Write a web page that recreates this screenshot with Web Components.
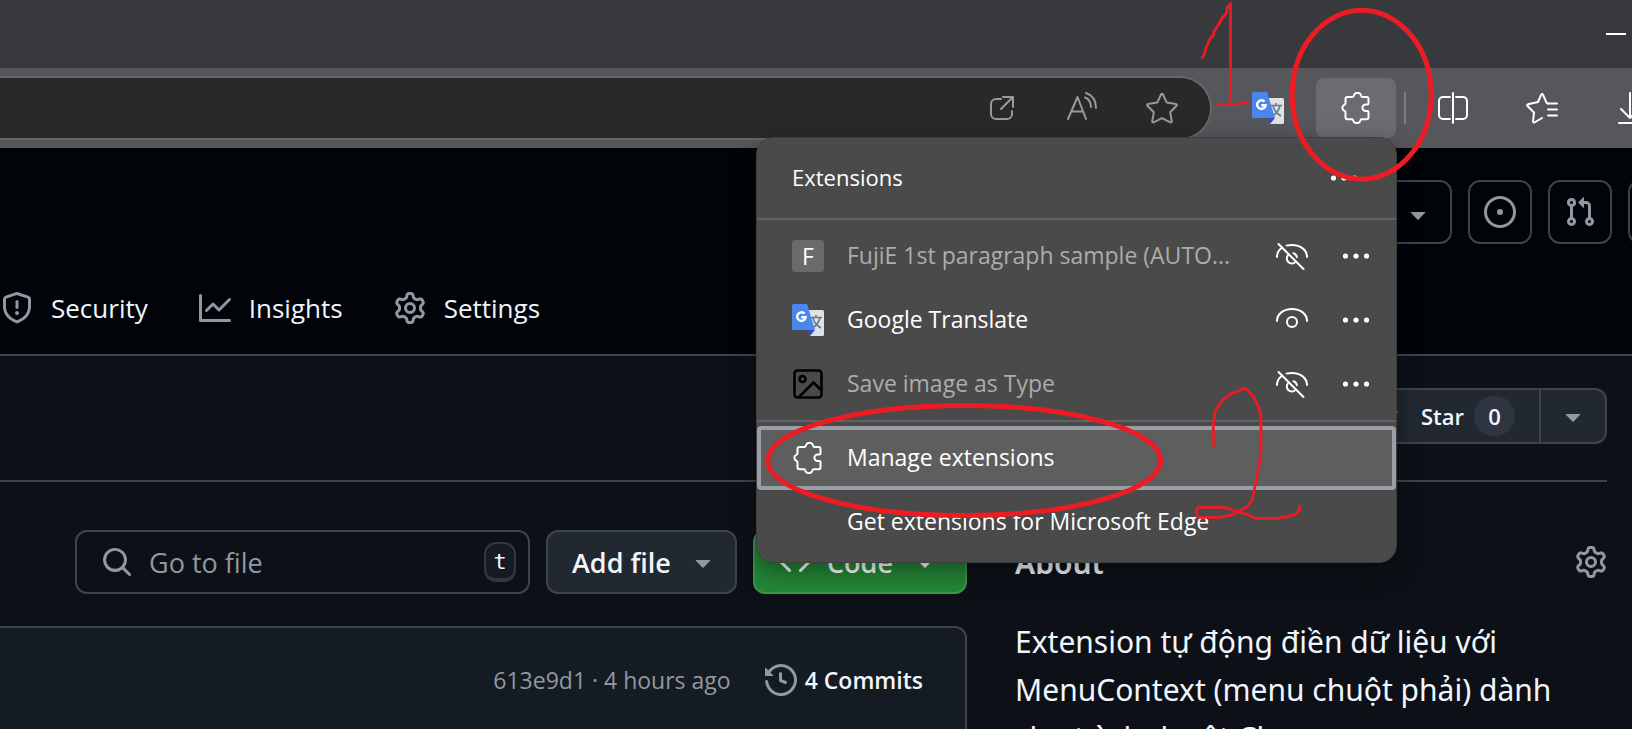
<!DOCTYPE html>
<html lang="en">
<head>
<meta charset="utf-8">
<title>Repository – browser window</title>
<style>
  html, body { margin: 0; height: 100%; background: #0d1117; }
  body { font-family: "Open Sans", "Noto Sans", sans-serif; font-size: 23px; color: #f0f6fc; }
</style>
</head>
<body>
<browser-window>
  <browser-titlebar slot="chrome"></browser-titlebar>
  <browser-toolbar slot="chrome"></browser-toolbar>
  <repo-page>
    <repo-header slot="header">
      <repo-tab icon="shield">Security</repo-tab>
      <repo-tab icon="graph">Insights</repo-tab>
      <repo-tab icon="gear">Settings</repo-tab>
    </repo-header>
    <repo-actions slot="actions" stars="0"></repo-actions>
    <file-tools slot="main"></file-tools>
    <commit-bar slot="main" sha="613e9d1" age="4 hours ago" count="4 Commits"></commit-bar>
    <about-panel slot="aside">Extension tự động điền dữ liệu với MenuContext (menu chuột phải) dành cho trình duyệt Chrome</about-panel>
  </repo-page>
  <extensions-menu slot="overlay">
    <extension-row icon="letter" muted hidden-eye>FujiE 1st paragraph sample (AUTO...</extension-row>
    <extension-row icon="translate">Google Translate</extension-row>
    <extension-row icon="picture" muted hidden-eye>Save image as Type</extension-row>
  </extensions-menu>
  <ink-marks slot="overlay"></ink-marks>
</browser-window>

<script>
const ICONS = {
  shield: ['0 0 16 16', '<path fill="currentColor" d="M7.467.133a1.748 1.748 0 0 1 1.066 0l5.25 1.68A1.75 1.75 0 0 1 15 3.48V7c0 1.566-.32 3.182-1.303 4.682-.983 1.498-2.585 2.813-5.032 3.855a1.697 1.697 0 0 1-1.33 0c-2.447-1.042-4.049-2.357-5.032-3.855C1.32 10.182 1 8.566 1 7V3.48a1.75 1.75 0 0 1 1.217-1.667Zm.61 1.429a.25.25 0 0 0-.153 0l-5.25 1.68a.25.25 0 0 0-.174.238V7c0 1.358.275 2.666 1.057 3.86.784 1.194 2.121 2.34 4.366 3.297a.196.196 0 0 0 .154 0c2.245-.956 3.582-2.104 4.366-3.298C13.225 9.666 13.5 8.36 13.5 7V3.48a.251.251 0 0 0-.174-.237l-5.25-1.68ZM8.75 4.75v3a.75.75 0 0 1-1.5 0v-3a.75.75 0 0 1 1.5 0ZM9 10.5a1 1 0 1 1-2 0 1 1 0 0 1 2 0Z"/>'],
  graph: ['0 0 16 16', '<path fill="currentColor" d="M1.5 1.75V13.5h13.75a.75.75 0 0 1 0 1.5H.75a.75.75 0 0 1-.75-.75V1.75a.75.75 0 0 1 1.5 0Zm14.28 2.53-5.25 5.25a.75.75 0 0 1-1.06 0L7 7.06 4.28 9.78a.751.751 0 0 1-1.042-.018.751.751 0 0 1-.018-1.042l3.25-3.25a.75.75 0 0 1 1.06 0L10 7.94l4.72-4.72a.751.751 0 0 1 1.042.018.751.751 0 0 1 .018 1.042Z"/>'],
  gear: ['0 0 16 16', '<path fill="currentColor" d="M8 0a8.2 8.2 0 0 1 .701.031C9.444.095 9.99.645 10.16 1.29l.288 1.107c.018.066.079.158.212.224.231.114.454.243.668.386.123.082.233.09.299.071l1.103-.303c.644-.176 1.392.021 1.82.63.27.385.506.792.704 1.218.315.675.111 1.422-.364 1.891l-.814.806c-.049.048-.098.147-.088.294.016.257.016.515 0 .772-.01.147.038.246.088.294l.814.806c.475.469.679 1.216.364 1.891a7.977 7.977 0 0 1-.704 1.217c-.428.61-1.176.807-1.82.63l-1.102-.302c-.067-.019-.177-.011-.3.071a5.909 5.909 0 0 1-.668.386c-.133.066-.194.158-.211.224l-.29 1.106c-.168.646-.715 1.196-1.458 1.26a8.006 8.006 0 0 1-1.402 0c-.743-.064-1.289-.614-1.458-1.26l-.289-1.106c-.018-.066-.079-.158-.212-.224a5.738 5.738 0 0 1-.668-.386c-.123-.082-.233-.09-.299-.071l-1.103.303c-.644.176-1.392-.021-1.82-.63a8.12 8.12 0 0 1-.704-1.218c-.315-.675-.111-1.422.363-1.891l.815-.806c.05-.048.098-.147.088-.294a6.214 6.214 0 0 1 0-.772c.01-.147-.038-.246-.088-.294l-.815-.806C.635 6.045.431 5.298.746 4.623a7.92 7.92 0 0 1 .704-1.217c.428-.61 1.176-.807 1.82-.63l1.102.302c.067.019.177.011.3-.071.214-.143.437-.272.668-.386.133-.066.194-.158.211-.224l.29-1.106C6.009.645 6.556.095 7.299.03 7.53.01 7.764 0 8 0Zm-.571 1.525c-.036.003-.108.036-.137.146l-.289 1.105c-.147.561-.549.967-.998 1.189-.173.086-.34.183-.5.29-.417.278-.97.423-1.529.27l-1.103-.303c-.109-.03-.175.016-.195.045-.22.312-.412.644-.573.99-.014.031-.021.11.059.19l.815.806c.411.406.562.957.53 1.456a4.709 4.709 0 0 0 0 .582c.032.499-.119 1.05-.53 1.456l-.815.806c-.081.08-.073.159-.059.19.162.346.353.677.573.989.02.03.085.076.195.046l1.102-.303c.56-.153 1.113-.008 1.53.27.161.107.328.204.501.29.447.222.85.629.997 1.189l.289 1.105c.029.109.101.143.137.146a6.6 6.6 0 0 0 1.142 0c.036-.003.108-.036.137-.146l.289-1.105c.147-.561.549-.967.998-1.189.173-.086.34-.183.5-.29.417-.278.97-.423 1.529-.27l1.103.303c.109.029.175-.016.195-.045.22-.313.411-.644.573-.99.014-.031.021-.11-.059-.19l-.815-.806c-.411-.406-.562-.957-.53-1.456a4.709 4.709 0 0 0 0-.582c-.032-.499.119-1.05.53-1.456l.815-.806c.081-.08.073-.159.059-.19a6.464 6.464 0 0 0-.573-.989c-.02-.03-.085-.076-.195-.046l-1.102.303c-.56.153-1.113.008-1.53-.27a4.44 4.44 0 0 0-.501-.29c-.447-.222-.85-.629-.997-1.189l-.289-1.105c-.029-.11-.101-.143-.137-.146a6.6 6.6 0 0 0-1.142 0ZM11 8a3 3 0 1 1-6 0 3 3 0 0 1 6 0ZM9.5 8a1.5 1.5 0 1 0-3.001.001A1.5 1.5 0 0 0 9.5 8Z"/>'],
  issue: ['0 0 16 16', '<path fill="currentColor" d="M8 9.5a1.5 1.5 0 1 0 0-3 1.5 1.5 0 0 0 0 3Z"/><path fill="currentColor" d="M8 0a8 8 0 1 1 0 16A8 8 0 0 1 8 0ZM1.5 8a6.5 6.5 0 1 0 13 0 6.5 6.5 0 0 0-13 0Z"/>'],
  pull: ['0 0 16 16', '<path fill="currentColor" d="M1.5 3.25a2.25 2.25 0 1 1 3 2.122v5.256a2.251 2.251 0 1 1-1.5 0V5.372A2.25 2.25 0 0 1 1.5 3.25Zm5.677-.177L9.573.677A.25.25 0 0 1 10 .854V2.5h1A2.5 2.5 0 0 1 13.5 5v5.628a2.251 2.251 0 1 1-1.5 0V5a1 1 0 0 0-1-1h-1v1.646a.25.25 0 0 1-.427.177L7.177 3.427a.25.25 0 0 1 0-.354ZM3.75 2.5a.75.75 0 1 0 0 1.5.75.75 0 0 0 0-1.5Zm0 9.5a.75.75 0 1 0 0 1.5.75.75 0 0 0 0-1.5Zm8.25.75a.75.75 0 1 0 1.5 0 .75.75 0 0 0-1.5 0Z"/>'],
  inbox: ['0 0 16 16', '<path fill="none" stroke="currentColor" stroke-width="1.5" d="M1 9.5 3 2.5h10l2 7v4H1ZM1 9.5h4l1 2h4l1-2h4"/>'],
  caret: ['0 0 16 16', '<path fill="currentColor" d="m4.427 7.427 3.396 3.396a.25.25 0 0 0 .354 0l3.396-3.396A.25.25 0 0 0 11.396 7H4.604a.25.25 0 0 0-.177.427Z"/>'],
  search: ['0 0 16 16', '<path fill="currentColor" d="M10.68 11.74a6 6 0 0 1-7.922-8.982 6 6 0 0 1 8.982 7.922l3.04 3.04a.749.749 0 0 1-.326 1.275.749.749 0 0 1-.734-.215ZM11.5 7a4.499 4.499 0 1 0-8.997 0A4.499 4.499 0 0 0 11.5 7Z"/>'],
  code: ['0 0 16 16', '<path fill="currentColor" d="m11.28 3.22 4.25 4.25a.75.75 0 0 1 0 1.06l-4.25 4.25a.749.749 0 0 1-1.275-.326.749.749 0 0 1 .215-.734L13.94 8l-3.72-3.72a.749.749 0 0 1 .326-1.275.749.749 0 0 1 .734.215Zm-6.56 0a.751.751 0 0 1 1.042.018.751.751 0 0 1 .018 1.042L2.06 8l3.72 3.72a.749.749 0 0 1-.326 1.275.749.749 0 0 1-.734-.215L.47 8.53a.75.75 0 0 1 0-1.06Z"/>'],
  history: ['0 0 16 16', '<path fill="currentColor" d="m.427 1.927 1.215 1.215a8.002 8.002 0 1 1-1.6 5.685.75.75 0 1 1 1.493-.154 6.5 6.5 0 1 0 1.18-4.458l1.358 1.358A.25.25 0 0 1 3.896 6H.25A.25.25 0 0 1 0 5.75V2.104a.25.25 0 0 1 .427-.177ZM7.75 4a.75.75 0 0 1 .75.75v2.992l2.028.812a.75.75 0 0 1-.557 1.392l-2.5-1A.751.751 0 0 1 7 8.25v-3.5A.75.75 0 0 1 7.75 4Z"/>'],
  star: ['0 0 16 16', '<path fill="currentColor" d="M8 .25a.75.75 0 0 1 .673.418l1.882 3.815 4.21.612a.75.75 0 0 1 .416 1.279l-3.046 2.97.719 4.192a.751.751 0 0 1-1.088.791L8 12.347l-3.766 1.98a.75.75 0 0 1-1.088-.79l.72-4.194L.818 6.374a.75.75 0 0 1 .416-1.28l4.21-.611L7.327.668A.75.75 0 0 1 8 .25Zm0 2.445L6.615 5.5a.75.75 0 0 1-.564.41l-3.097.45 2.24 2.184a.75.75 0 0 1 .216.664l-.528 3.084 2.769-1.456a.75.75 0 0 1 .698 0l2.77 1.456-.53-3.084a.75.75 0 0 1 .216-.664l2.24-2.183-3.096-.45a.75.75 0 0 1-.564-.41Z"/>'],
  minimize: ['0 0 32 32', '<path fill="currentColor" d="M6 15h20v2H6z"/>'],
  open: ['0 0 32 32', '<g fill="none" stroke="currentColor" stroke-width="2" stroke-linecap="round" stroke-linejoin="round"><path d="M15 7H10a5 5 0 0 0-5 5v10a5 5 0 0 0 5 5h11a5 5 0 0 0 5-5v-3"/><path d="M17 5h10v10M27 5 15 17"/></g>'],
  read: ['0 0 32 32', '<g fill="none" stroke="currentColor" stroke-width="2" stroke-linecap="round" stroke-linejoin="round"><path d="M2 27 11.500 5 20 27M5.500 19.500h11.500"/><path d="M19 5.500c4 1.500 6 5 6 9.500M20 1c6 2 10 7 10 15"/></g>'],
  favorite: ['0 0 32 32', '<path fill="none" stroke="currentColor" stroke-width="2" stroke-linejoin="round" d="M15.200 2.200a1 1 0 0 1 1.600 0L20.800 10.600 30 12a1 1 0 0 1 .6 1.700L24.200 20.300 25.800 29.400a1 1 0 0 1-1.400 1L16 26.200 7.600 30.400a1 1 0 0 1-1.400-1L7.800 20.300 1.400 13.700A1 1 0 0 1 2 12L11.200 10.600Z"/>'],
  puzzle: ['0 0 32 32', '<path fill="none" stroke="currentColor" stroke-width="2" stroke-linejoin="round" d="M7.500 5h5.200c.8 0 1-.6 1.200-1.400a3.700 3.700 0 0 1 7.200 0c.2.8.4 1.400 1.200 1.400h4.200a2 2 0 0 1 2 2v4.500c0 .7-.4 1-1 1h-1.800a3.300 3.300 0 0 0 0 6.600h1.800c.6 0 1 .3 1 1v5.200a2 2 0 0 1-2 2h-5c-.8 0-1 .6-1.200 1.400a3.700 3.700 0 0 1-7 0c-.2-.8-.4-1.400-1.200-1.400H7.500a2 2 0 0 1-2-2v-5.200c0-.8-.4-1-1.200-1.300a3.300 3.300 0 0 1 0-6c.8-.3 1.200-.5 1.200-1.300V7a2 2 0 0 1 2-2Z"/>'],
  split: ['0 0 32 32', '<g fill="none" stroke="currentColor" stroke-width="2" stroke-linecap="round"><path d="M12 5H5a4 4 0 0 0-4 4v14a4 4 0 0 0 4 4h7M18 5h7a4 4 0 0 1 4 4v14a4 4 0 0 1-4 4h-7M15 1v30"/></g>'],
  favorites: ['0 0 32 32', '<g fill="none" stroke="currentColor" stroke-width="2" stroke-linecap="round" stroke-linejoin="round"><path d="M22 11.500c-.8 0-1.200-.3-1.600-1L17 2.600a1 1 0 0 0-1.800 0L12 10 2 12.300a1 1 0 0 0-.5 1.700L8 20.500 7 29.600a1 1 0 0 0 1.400.9L16 26"/><path d="M22 11.500h9M22 17.500h9M22 23.500h9"/></g>'],
  download: ['0 0 32 32', '<path fill="none" stroke="currentColor" stroke-width="2" stroke-linecap="round" stroke-linejoin="round" d="M16 1v25M7 17l9 9 9-9M5 31h22"/>'],
  eye: ['0 0 32 32', '<g fill="none" stroke="currentColor" stroke-width="2"><path stroke-linecap="round" d="M1 17C1 10 7.500 5 16 5s15 5 15 12"/><circle cx="16" cy="18" r="5"/></g>'],
  'eye-off': ['0 0 32 32', '<g fill="none" stroke="currentColor" stroke-width="2" stroke-linecap="round"><path d="M1 17c0-4 2-7.400 5.500-9.500M10.500 5.600C12.200 5.200 14 5 16 5c8.500 0 15 5 15 12M17.500 13.200a5 5 0 0 1 3.400 4M19.800 21.500a5 5 0 1 1-7-7M2.500 4l25 25"/></g>'],
  more: ['0 0 32 32', '<g fill="currentColor"><circle cx="5.500" cy="16" r="2.600"/><circle cx="16" cy="16" r="2.600"/><circle cx="26.500" cy="16" r="2.600"/></g>'],
  picture: ['0 0 32 32', '<g fill="none" stroke="#000" stroke-width="2.600" stroke-linejoin="round"><rect x="2.500" y="2.500" width="27" height="27" rx="3"/><circle cx="10.500" cy="11" r="3"/><path d="M6.500 29.500 21.500 14.500 29.500 22.500"/></g>'],
  translate: ['0 0 32 32', '<path fill="#dfe1e3" d="M15 6h15.500A1.500 1.500 0 0 1 32 7.500v23a1.500 1.500 0 0 1-1.500 1.500H18z"/><path fill="#3949c6" d="M16 26h7l-5 6z"/><path fill="none" stroke="#5f7f8c" stroke-width="1.600" d="M18.500 13.500H30M24 11v2.500M28 13.500c-1 5-4.500 8.500-7 10.500M21 14c1 4 4.500 8 8 10"/><path fill="#4a86ee" d="M1.500 0H15l8 26H1.500A1.500 1.500 0 0 1 0 24.500v-23A1.500 1.500 0 0 1 1.500 0Z"/><path fill="none" stroke="#fff" stroke-width="2.400" d="M12.500 9.600A4.300 4.300 0 1 0 13.700 13.200H9.200"/>']
};

/* Registers an element whose open shadow root is filled from a template string. */
function define(name, render) {
  customElements.define(name, class extends HTMLElement {
    constructor() {
      super();
      this.attachShadow({ mode: 'open' });
    }
    connectedCallback() {
      const t = document.createElement('template');
      t.innerHTML = '<style>:host,*{box-sizing:border-box}button{font:inherit;color:inherit;background:none;border:0;padding:0;margin:0}</style>' + render(this);
      this.shadowRoot.replaceChildren(t.content.cloneNode(true));
    }
  });
}

define('ui-icon', el => {
  const [box, body] = ICONS[el.getAttribute('name')];
  return `<style>:host{display:block;flex:none;width:32px;height:32px}svg{display:block;width:100%;height:100%}</style>
  <svg viewBox="${box}" aria-hidden="true">${body}</svg>`;
});

define('browser-window', () => `<style>
  :host{display:flex;flex-direction:column;position:relative;height:100vh;overflow:hidden}
  </style><slot name="chrome"></slot><slot></slot><slot name="overlay"></slot>`);

define('browser-titlebar', () => `<style>
  :host{display:flex;flex:none;justify-content:flex-end;align-items:center;height:68px;background:#38393c;color:#fff}
  </style><button aria-label="Minimize"><ui-icon name="minimize"></ui-icon></button>`);

define('tool-button', el => `<style>
  :host{display:block;flex:none;width:80px}
  button{display:grid;place-items:center;width:100%;height:60px;border-radius:8px}
  :host([active]) button{background:#6b6c71}
  </style><button aria-label="${el.getAttribute('label')}"><ui-icon name="${el.getAttribute('icon')}"></ui-icon></button>`);

define('browser-toolbar', () => `<style>
  :host{display:flex;flex:none;align-items:center;gap:8px;height:80px;background:#56575c;color:#fff;overflow:hidden}
  .address{display:flex;flex:1;min-width:0;align-items:center;height:64px;margin-right:8px;padding-right:8px;
    background:#292929;border:2px solid #666;border-left:0;border-radius:0 32px 32px 0;color:#999}
  input{flex:1;min-width:0;border:0;background:none;color:#fff;font:inherit;outline:0}
  .rule{flex:none;width:2px;height:32px;background:#7c7d81}
  .last{margin-right:-38px}
  </style>
  <div class="address"><input aria-label="Address">
    <tool-button icon="open" label="Open in app"></tool-button>
    <tool-button icon="read" label="Read aloud"></tool-button>
    <tool-button icon="favorite" label="Add to favorites"></tool-button></div>
  <tool-button icon="translate" label="Google Translate"></tool-button>
  <tool-button icon="puzzle" label="Extensions" active></tool-button>
  <span class="rule"></span>
  <tool-button icon="split" label="Split screen"></tool-button>
  <tool-button icon="favorites" label="Favorites"></tool-button>
  <tool-button class="last" icon="download" label="Downloads"></tool-button>`);

define('repo-page', () => `<style>
  :host{display:block;flex:1;min-height:0;overflow:hidden;background:#0d1117}
  .columns{display:grid;grid-template-columns:minmax(0,1fr) 592px;gap:48px;padding:48px 25px 0 0}
  </style><slot name="header"></slot><slot name="actions"></slot>
  <div class="columns"><main><slot name="main"></slot></main><aside><slot name="aside"></slot></aside></div>`);

define('repo-tab', el => `<style>
  :host{display:block}
  a{display:flex;align-items:center;gap:18px;height:92px;color:#f0f6fc;font-size:26px;text-decoration:none}
  ui-icon{color:#9198a1}
  </style><a href="#"><ui-icon name="${el.getAttribute('icon')}"></ui-icon><slot></slot></a>`);

define('repo-header', () => `<style>
  :host{display:block;background:#010409;border-bottom:2px solid #3d444d;overflow:hidden}
  .top{display:flex;justify-content:flex-end;gap:16px;margin:32px -60px 0 0}
  .top button{display:grid;place-items:center;width:64px;height:64px;border:2px solid #3d444d;border-radius:12px;color:#9198a1}
  .top .create{width:120px;justify-items:end;padding:4px 16px 0 0}
  nav{display:flex;gap:51px;margin-top:18px;padding-left:1px}
  </style>
  <div class="top"><button class="create" aria-label="Create new"><ui-icon name="caret"></ui-icon></button>
    <button aria-label="Issues"><ui-icon name="issue"></ui-icon></button>
    <button aria-label="Pull requests"><ui-icon name="pull"></ui-icon></button>
    <button aria-label="Notifications"><ui-icon name="inbox"></ui-icon></button></div>
  <nav><slot></slot></nav>`);

define('repo-actions', el => `<style>
  :host{display:flex;justify-content:flex-end;margin-right:25px;padding:32px 0 36px;border-bottom:2px solid #3d444d}
  .group{display:flex;height:56px;background:#212830;border:2px solid #3d444d;border-radius:12px;font-size:22px;font-weight:600}
  .star{display:flex;align-items:center;padding:0 24px;border-right:2px solid #3d444d}
  .star ui-icon{color:#9198a1;margin-right:22px}
  .count{display:grid;place-items:center;width:41px;height:40px;margin-left:10px;border-radius:20px;background:#2f3641}
  .more{display:grid;place-items:center;width:64px;color:#9198a1}
  </style>
  <div class="group"><button class="star"><ui-icon name="star"></ui-icon>Star<span class="count">${el.getAttribute('stars')}</span></button>
  <button class="more" aria-label="Add to list"><ui-icon name="caret"></ui-icon></button></div>`);

define('file-tools', () => `<style>
  :host{display:flex;gap:16px;margin-left:75px;font-size:27px}
  .search{display:flex;flex:1;min-width:0;align-items:center;height:64px;padding:0 12px 0 24px;border:2px solid #3d444d;border-radius:12px;color:#9198a1}
  input{flex:1;min-width:0;margin-left:16px;padding:0;border:0;outline:0;background:none;color:#f0f6fc;font:inherit}
  input::placeholder{color:#9198a1;opacity:1}
  kbd{display:grid;place-items:center;width:32px;height:40px;border:2px solid #2f3742;border-bottom-width:4px;border-radius:12px;
    background:#151b23;color:#f0f6fc;font:22px "DejaVu Sans Mono",monospace}
  button{display:flex;align-items:center;height:64px;border:2px solid #3d444d;border-radius:12px;font-weight:600}
  .add{width:191px;justify-content:space-between;padding:0 16px 0 24px;background:#212830}
  .add ui-icon{color:#9198a1}
  .code{width:214px;padding:0 24px;gap:16px;background:#238636;border-color:#3a9549;color:#fff}
  .code ui-icon:last-child{margin-left:auto}
  </style>
  <label class="search"><ui-icon name="search"></ui-icon><input type="text" placeholder="Go to file" aria-label="Go to file"><kbd>t</kbd></label>
  <button class="add">Add file<ui-icon name="caret"></ui-icon></button>
  <button class="code"><ui-icon name="code"></ui-icon>Code<ui-icon name="caret"></ui-icon></button>`);

define('commit-bar', el => `<style>
  :host{display:flex;justify-content:flex-end;align-items:center;gap:34px;height:108px;margin:32px 0 0 -20px;padding-right:42px;
    background:#151b23;border:2px solid #3d444d;border-radius:12px 12px 0 0;color:#9198a1;font-size:23px}
  a{display:flex;align-items:center;gap:8px;color:#f0f6fc;font-weight:600;text-decoration:none}
  a ui-icon{color:#9198a1}
  </style><span>${el.getAttribute('sha')} · ${el.getAttribute('age')}</span>
  <a href="#"><ui-icon name="history"></ui-icon>${el.getAttribute('count')}</a>`);

define('about-panel', () => `<style>
  :host{display:block;font-family:"Noto Sans","Open Sans",sans-serif;font-size:30px}
  header{display:flex;justify-content:space-between;align-items:center;height:64px}
  h2{margin:0;font-size:30px;font-weight:600}
  button{color:#9198a1}
  p{margin:24px 0 0;line-height:48px}
  </style><header><h2>About</h2><button aria-label="Edit repository details"><ui-icon name="gear"></ui-icon></button></header>
  <p><slot></slot></p>`);

define('extension-row', el => {
  const off = el.hasAttribute('hidden-eye');
  const name = el.getAttribute('icon');
  return `<style>
  :host{display:flex;align-items:center;height:64px;padding:0 8px 0 35px}
  .badge{display:grid;place-items:center;width:32px;height:32px;border-radius:4px;background:#6b6b6b;color:#fff}
  .name{flex:1;margin-left:23px;padding-bottom:2px;white-space:nowrap}
  :host([muted]) .name{color:#acacac}
  button{display:grid;place-items:center;width:64px;height:64px}
  </style>${name === 'letter' ? '<span class="badge">F</span>' : `<ui-icon name="${name}"></ui-icon>`}
  <span class="name"><slot></slot></span>
  <button aria-label="${off ? 'Show' : 'Hide'} in toolbar"><ui-icon name="${off ? 'eye-off' : 'eye'}"></ui-icon></button>
  <button aria-label="More actions"><ui-icon name="more"></ui-icon></button>`;
});

define('extensions-menu', () => `<style>
  :host{position:absolute;top:137px;right:235px;width:641px;background:#4a4a4a;border:1px solid #3e3e3e;border-radius:18px;color:#fff;
    font-size:23px;box-shadow:0 8px 24px rgba(0,0,0,.4);overflow:hidden}
  header{display:flex;justify-content:space-between;align-items:center;height:80px;padding:0 20px 0 35px}
  h2{margin:0;padding-bottom:2px;font-size:22px;font-weight:400}
  header button{display:grid;place-items:center;width:64px;height:64px}
  .list,.links{padding:4px 0;border-top:2px solid #636363}
  .links{padding-bottom:8px}
  .links button{display:flex;align-items:center;width:100%;height:64px;padding-left:35px;gap:23px}
  .links span{padding-bottom:2px}
  .links .current{background:#5e5e5e;border:4px solid #9a9ea6;border-radius:4px;padding-left:31px}
  .links button:last-child{padding-left:90px}
  </style>
  <header><h2>Extensions</h2><button aria-label="More options"><ui-icon name="more"></ui-icon></button></header>
  <div class="list"><slot></slot></div>
  <div class="links"><button class="current"><ui-icon name="puzzle"></ui-icon><span>Manage extensions</span></button>
  <button><span>Get extensions for Microsoft Edge</span></button></div>`);

/* Hand-drawn pen annotations, a free canvas anchored to the window's right edge. */
define('ink-marks', () => `<style>
  :host{position:absolute;top:0;right:0;width:1632px;height:729px;pointer-events:none}
  svg{display:block}
  </style><svg width="1632" height="729" viewBox="0 0 1632 729" fill="none" stroke="#ed1c24" stroke-linecap="round" stroke-linejoin="round">
  <g stroke-width="5"><ellipse cx="1361.700" cy="94.700" rx="69.500" ry="84.500"/><ellipse cx="964.200" cy="460.500" rx="196.500" ry="55"/></g>
  <g stroke-width="2.800"><path d="M1202 57.500 1204 55 1206 48 1210 39 1213.500 35 1214 31.500 1219 24 1222 18.500 1226.500 13 1227 8 1230.500 3.500V103.500M1217.500 104.500H1238L1242 103H1248"/>
  <path d="M1214.300 446.700 1213.300 440V425L1215 411.700 1221.700 400.700 1230 394.300 1239.300 390.700 1241.700 389H1246.700L1249 392 1253.300 396.700 1258.300 406.700 1261 416.700V450L1259 466.700 1256 480 1254 491.700 1252 500.700 1246.700 507.300 1237.300 511.700 1229.300 515.700 1219.300 517.300H1199.300L1196.500 514.700V509L1199.300 507.300H1225L1237.300 511.700 1246.700 514.300 1255 518.300H1277.700L1283 517H1287.700L1290 515.500 1295 514.700 1299 511.300 1299.700 506"/></g></svg>`);
</script>
</body>
</html>
